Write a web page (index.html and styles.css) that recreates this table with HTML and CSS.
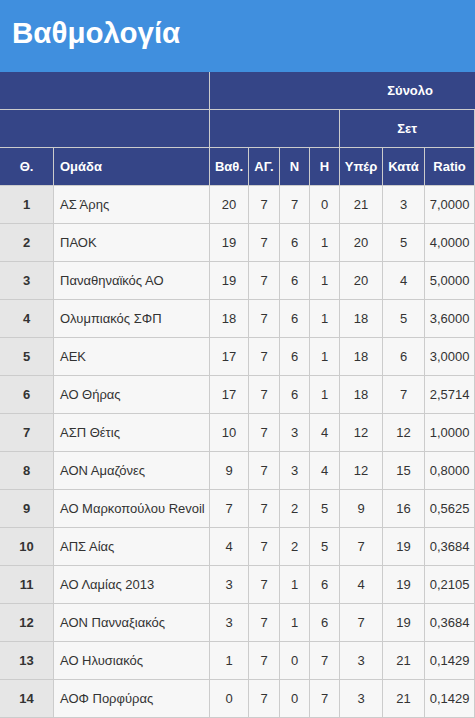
FILE: index.html
```html
<!DOCTYPE html>
<html lang="el">
<head>
<meta charset="utf-8">
<title>Βαθμολογία</title>
<link rel="stylesheet" href="styles.css">
</head>
<body>
<header class="title-bar">
  <h1 class="title">Βαθμολογία</h1>
</header>
<table class="standings">
  <colgroup>
    <col class="c-pos"><col class="c-team"><col class="c-pts"><col class="c-gp">
    <col class="c-w"><col class="c-l"><col class="c-for"><col class="c-against"><col class="c-ratio">
  </colgroup>
  <thead>
    <tr>
      <th colspan="2"></th>
      <th colspan="7" class="group-total">Σύνολο</th>
    </tr>
    <tr>
      <th colspan="2"></th>
      <th colspan="4"></th>
      <th colspan="3">Σετ</th>
    </tr>
    <tr>
      <th>Θ.</th>
      <th class="left">Ομάδα</th>
      <th>Βαθ.</th>
      <th>ΑΓ.</th>
      <th>Ν</th>
      <th>Η</th>
      <th>Υπέρ</th>
      <th>Κατά</th>
      <th>Ratio</th>
    </tr>
  </thead>
  <tbody>
    <tr><td class="pos">1</td><td class="team">ΑΣ Άρης</td><td>20</td><td>7</td><td>7</td><td>0</td><td>21</td><td>3</td><td>7,0000</td></tr>
    <tr><td class="pos">2</td><td class="team">ΠΑΟΚ</td><td>19</td><td>7</td><td>6</td><td>1</td><td>20</td><td>5</td><td>4,0000</td></tr>
    <tr><td class="pos">3</td><td class="team">Παναθηναϊκός ΑΟ</td><td>19</td><td>7</td><td>6</td><td>1</td><td>20</td><td>4</td><td>5,0000</td></tr>
    <tr><td class="pos">4</td><td class="team">Ολυμπιακός ΣΦΠ</td><td>18</td><td>7</td><td>6</td><td>1</td><td>18</td><td>5</td><td>3,6000</td></tr>
    <tr><td class="pos">5</td><td class="team">ΑΕΚ</td><td>17</td><td>7</td><td>6</td><td>1</td><td>18</td><td>6</td><td>3,0000</td></tr>
    <tr><td class="pos">6</td><td class="team">ΑΟ Θήρας</td><td>17</td><td>7</td><td>6</td><td>1</td><td>18</td><td>7</td><td>2,5714</td></tr>
    <tr><td class="pos">7</td><td class="team">ΑΣΠ Θέτις</td><td>10</td><td>7</td><td>3</td><td>4</td><td>12</td><td>12</td><td>1,0000</td></tr>
    <tr><td class="pos">8</td><td class="team">ΑΟΝ Αμαζόνες</td><td>9</td><td>7</td><td>3</td><td>4</td><td>12</td><td>15</td><td>0,8000</td></tr>
    <tr><td class="pos">9</td><td class="team">ΑΟ Μαρκοπούλου Revoil</td><td>7</td><td>7</td><td>2</td><td>5</td><td>9</td><td>16</td><td>0,5625</td></tr>
    <tr><td class="pos">10</td><td class="team">ΑΠΣ Αίας</td><td>4</td><td>7</td><td>2</td><td>5</td><td>7</td><td>19</td><td>0,3684</td></tr>
    <tr><td class="pos">11</td><td class="team">ΑΟ Λαμίας 2013</td><td>3</td><td>7</td><td>1</td><td>6</td><td>4</td><td>19</td><td>0,2105</td></tr>
    <tr><td class="pos">12</td><td class="team">ΑΟΝ Πανναξιακός</td><td>3</td><td>7</td><td>1</td><td>6</td><td>7</td><td>19</td><td>0,3684</td></tr>
    <tr><td class="pos">13</td><td class="team">ΑΟ Ηλυσιακός</td><td>1</td><td>7</td><td>0</td><td>7</td><td>3</td><td>21</td><td>0,1429</td></tr>
    <tr><td class="pos">14</td><td class="team">ΑΟΦ Πορφύρας</td><td>0</td><td>7</td><td>0</td><td>7</td><td>3</td><td>21</td><td>0,1429</td></tr>
  </tbody>
</table>
</body>
</html>
```
FILE: styles.css
```css
html, body {
  margin: 0;
  padding: 0;
}
body {
  font-family: "Liberation Sans", Arial, sans-serif;
  background: #ffffff;
  width: 475px;
  overflow: hidden;
}
.title-bar {
  box-sizing: border-box;
  height: 72px;
  padding: 17px 12px 0;
  background: #408fde;
}
.title {
  margin: 0;
  font-size: 29.5px;
  font-weight: bold;
  color: #ffffff;
  line-height: 32px;
}
.standings {
  table-layout: fixed;
  width: 475px;
  border-collapse: separate;
  border-spacing: 0;
  font-size: 13px;
}
.c-pos { width: 54px; }
.c-team { width: 156px; }
.c-pts { width: 39px; }
.c-gp { width: 31px; }
.c-w { width: 30px; }
.c-l { width: 30px; }
.c-for { width: 43px; }
.c-against { width: 42px; }
.c-ratio { width: 50px; }
.standings tr {
  height: 38px;
}
.standings th,
.standings td {
  padding: 0 4px;
  text-align: center;
  vertical-align: middle;
  white-space: nowrap;
  border-right: 1px solid #cccccc;
  border-bottom: 1px solid #cccccc;
}
.standings th {
  background: #354587;
  color: #ffffff;
  font-weight: bold;
}
.standings th.group-total {
  border-right: none;
  padding-left: 135px;
  padding-right: 0;
}
.standings td {
  background: #f7f7f7;
  color: #333333;
}
.standings .left,
.standings td.team {
  text-align: left;
  padding-left: 6px;
}
.standings td.pos {
  background: #e6e6e6;
  font-weight: bold;
}
```
